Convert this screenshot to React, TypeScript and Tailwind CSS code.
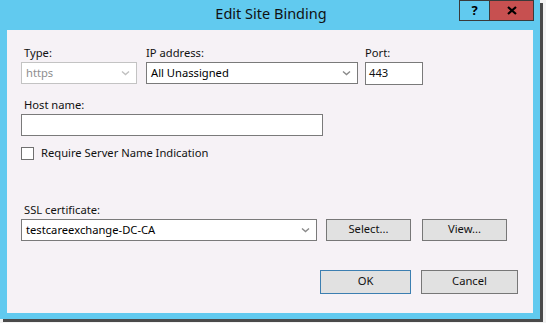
import React from "react";

const font = { fontFamily: '"Noto Sans", "Open Sans", sans-serif' };

function Chevron({ color = "#7a7a7a" }: { color?: string }) {
  return (
    <svg width="9" height="6" viewBox="0 0 9 6" className="shrink-0">
      <path d="M1 1.5 L4.5 4.5 L8 1.5" fill="none" stroke={color} strokeWidth="1.4" />
    </svg>
  );
}

function Combo({ value, width, disabled }: { value: string; width: string; disabled?: boolean }) {
  return (
    <div
      className={`${width} h-[22px] flex items-center justify-between bg-white border pl-[4px] pr-[6px] ${
        disabled ? "border-[#c3c3c3] text-[#8e8e8e]" : "border-[#7a7a7a] text-black"
      }`}
    >
      <span className="leading-none">{value}</span>
      <Chevron color={disabled ? "#c0c0c0" : "#8a8a8a"} />
    </div>
  );
}

function Btn({ label, width, primary }: { label: string; width: string; primary?: boolean }) {
  return (
    <div
      className={`${width} flex items-center justify-center bg-[#e1e1e1] border ${
        primary ? "border-[#3c7fb1]" : "border-[#777777]"
      }`}
    >
      {label}
    </div>
  );
}

export default function App() {
  return (
    <div className="w-[546px] h-[323px] bg-[#f3f3f3] overflow-hidden" style={font}>
      <div className="w-[540px] h-[319px] bg-[#61caef] flex flex-col px-[7px] pb-[6px] shadow-[3px_3px_0_#4a4a4a]">
        {/* title bar */}
        <div className="relative h-[30px] shrink-0 flex items-center justify-center">
          <span className="text-[14.5px] text-[#111] pb-[2px] pl-[2px]">Edit Site Binding</span>
          <div className="absolute top-0 right-[-1px] flex">
            <div className="w-[30px] h-[21px] border border-[#3a3a3a] border-r-0 flex items-center justify-center text-[13px] font-bold text-black">
              ?
            </div>
            <div className="w-[45px] h-[21px] bg-[#c75050] border border-[#3a3a3a] flex items-center justify-center">
              <svg width="10" height="9" viewBox="0 0 10 9">
                <path d="M1 1 L9 8 M9 1 L1 8" stroke="#000" strokeWidth="2.2" />
              </svg>
            </div>
          </div>
        </div>

        {/* content */}
        <div className="flex-1 bg-[#f6f2f6] pl-[14px] pt-[15px] text-[11.2px] text-[#111] flex flex-col">
          <div className="flex">
            <div className="flex flex-col">
              <span className="pl-[3px] h-[17px]">Type:</span>
              <Combo value="https" width="w-[116px]" disabled />
            </div>
            <div className="flex flex-col ml-[9px]">
              <span className="h-[17px]">IP address:</span>
              <Combo value="All Unassigned" width="w-[212px]" />
            </div>
            <div className="flex flex-col ml-[7px]">
              <span className="h-[17px]">Port:</span>
              <div className="w-[58px] h-[23px] bg-white border border-[#7a7a7a] pl-[3px] flex items-center">443</div>
            </div>
          </div>

          <span className="pl-[3px] mt-[12px] h-[17px]">Host name:</span>
          <div className="w-[302px] h-[22px] bg-white border border-[#7a7a7a]" />

          <div className="flex items-center mt-[9px]">
            <div className="w-[13px] h-[13px] bg-white border border-[#707070]" />
            <span className="ml-[7px]">Require Server Name Indication</span>
          </div>

          <span className="pl-[3px] mt-[40px] h-[17px]">SSL certificate:</span>
          <div className="flex h-[22px]">
            <Combo value="testcareexchange-DC-CA" width="w-[296px]" />
            <Btn label="Select..." width="w-[85px] ml-[9px]" />
            <Btn label="View..." width="w-[85px] ml-[11px]" />
          </div>

          <div className="flex justify-end h-[24px] mt-[29px] pr-[15px]">
            <Btn label="OK" width="w-[91px]" primary />
            <Btn label="Cancel" width="w-[97px] ml-[10px]" />
          </div>
        </div>
      </div>
    </div>
  );
}
